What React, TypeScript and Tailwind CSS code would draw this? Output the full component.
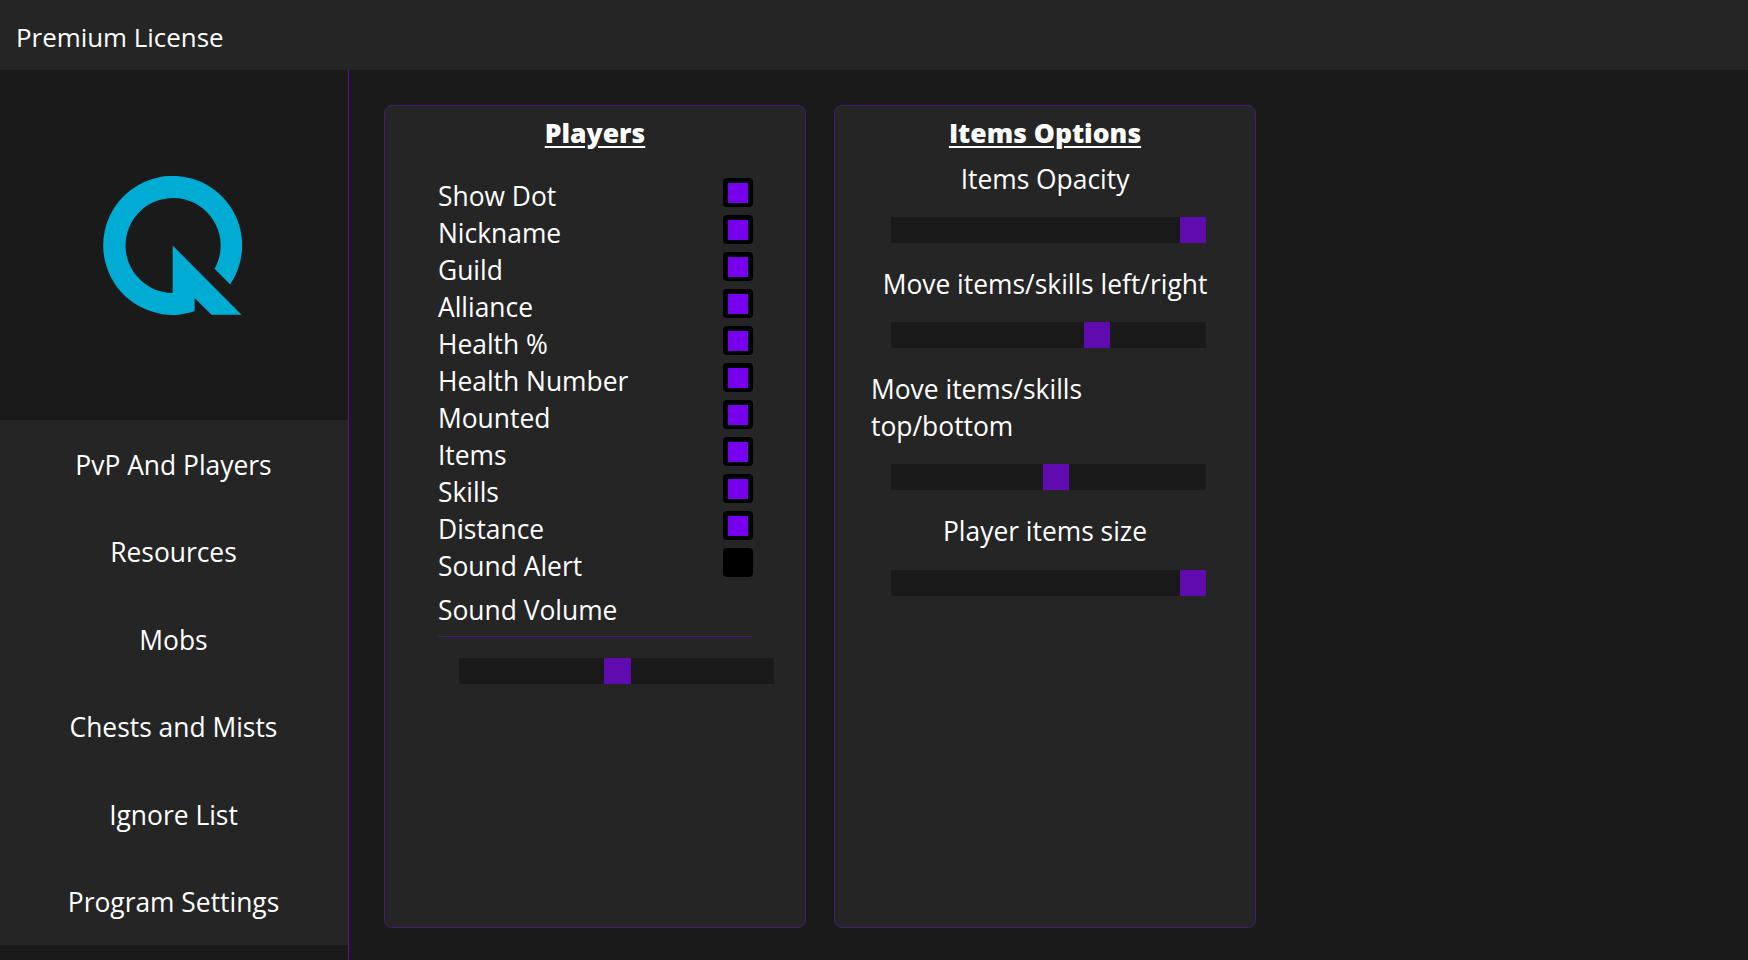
const font = "font-['Open_Sans','Noto_Sans',sans-serif]";

const menu = ["PvP And Players", "Resources", "Mobs", "Chests and Mists", "Ignore List", "Program Settings"];

const players = [
  { label: "Show Dot", on: true },
  { label: "Nickname", on: true },
  { label: "Guild", on: true },
  { label: "Alliance", on: true },
  { label: "Health %", on: true },
  { label: "Health Number", on: true },
  { label: "Mounted", on: true },
  { label: "Items", on: true },
  { label: "Skills", on: true },
  { label: "Distance", on: true },
  { label: "Sound Alert", on: false },
];

const Logo = () => (
  <svg width="139" height="139" viewBox="310 526 417 418" className="mt-[1px] mr-[3px]">
    <path
      fill="#00acd3"
      d="M692 852A209 209 0 1 0 585 933L585 893L636 943L726 943L519 735L519 878A143 143 0 1 1 645 805Z"
    />
  </svg>
);

const Slider = ({ offset, width = 26 }: { offset: number; width?: number }) => (
  <div className="h-[26px] w-[315px] bg-[#1a1a1a]">
    <div className="h-full bg-[#5f0bb0]" style={{ marginLeft: offset, width }} />
  </div>
);

const Check = ({ on }: { on: boolean }) => (
  <div className="flex h-[29px] w-[30px] items-center justify-center rounded-[4px] bg-black">
    {on && <div className="h-5 w-5 bg-[#7700ee]" />}
  </div>
);

const Title = ({ children }: { children: string }) => (
  <h2 className="h-[48px] pt-[7px] text-center text-[26.5px] leading-[40px] font-extrabold underline underline-offset-[3px]">
    {children}
  </h2>
);

export default function App() {
  return (
    <div className={`${font} flex h-[960px] w-[1748px] flex-col overflow-hidden bg-[#1a1a1a] text-[26.4px] text-white`}>
      <header className="flex h-[70px] shrink-0 items-center bg-[#252525] pt-[4px] pl-4 text-[25.9px]">Premium License</header>
      <div className="flex flex-1">
        <aside className="w-[349px] shrink-0 border-r border-[#5f0bb0]">
          <div className="flex h-[350px] items-center justify-center">
            <Logo />
          </div>
          <nav className="flex h-[525px] flex-col bg-[#252525]">
            {menu.map((m) => (
              <div key={m} className="flex flex-1 items-center justify-center pt-[4px] pr-[1px]">
                {m}
              </div>
            ))}
          </nav>
        </aside>
        <main className="flex items-start gap-[28px] pt-[35px] pl-[35px]">
          <section className="h-[823px] w-[422px] rounded-[8px] border border-[#431c78] bg-[#252525]">
            <Title>Players</Title>
            <div className="mt-[24px] w-[315px] translate-x-[53px]">
              {players.map((p) => (
                <div key={p.label} className="flex h-[37px] items-start justify-between">
                  <span className="leading-[37px]">{p.label}</span>
                  <Check on={p.on} />
                </div>
              ))}
              <div className="mt-[6px] h-[46px] border-b border-[#431c78] leading-[39px]">Sound Volume</div>
            </div>
            <div className="mt-[21px] ml-[74px]">
              <Slider offset={145} width={27} />
            </div>
          </section>
          <section className="h-[823px] w-[422px] rounded-[8px] border border-[#431c78] bg-[#252525]">
            <Title>Items Options</Title>
            <div className="mt-[7px] h-[37px] text-center leading-[37px]">Items Opacity</div>
            <div className="mt-[19px] ml-[56px]">
              <Slider offset={289} />
            </div>
            <div className="mt-[23px] h-[37px] text-center leading-[37px]">Move items/skills left/right</div>
            <div className="mt-[19px] ml-[56px]">
              <Slider offset={193} />
            </div>
            <div className="mt-[23px] w-[310px] pl-[36px] leading-[37px]">Move items/skills top/bottom</div>
            <div className="mt-[19px] ml-[56px]">
              <Slider offset={152} />
            </div>
            <div className="mt-[23px] h-[37px] text-center leading-[37px]">Player items size</div>
            <div className="mt-[20px] ml-[56px]">
              <Slider offset={289} />
            </div>
          </section>
        </main>
      </div>
    </div>
  );
}
